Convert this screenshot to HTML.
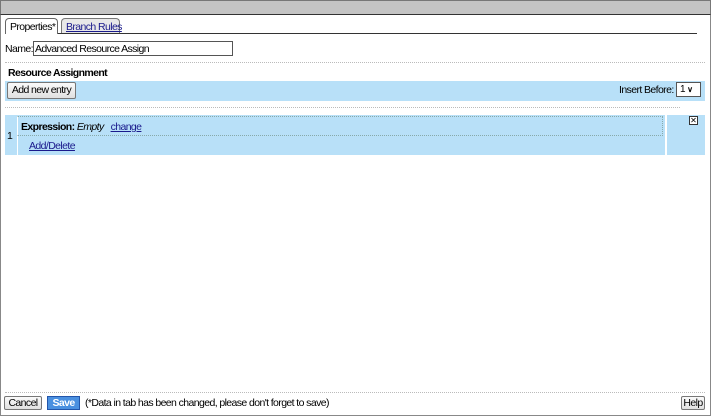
<!DOCTYPE html>
<html><head><style>
*{margin:0;padding:0;box-sizing:border-box}
body{width:711px;height:416px;background:#fff;font-family:"Liberation Sans",Arial,sans-serif;font-size:10.5px;letter-spacing:-0.6px;color:#000;position:relative;overflow:hidden;white-space:nowrap}
.a{position:absolute}
a{color:#1a1a8c;text-decoration:underline}
.btn{position:absolute;border:1px solid #777;border-radius:2px;background:linear-gradient(#fafafa,#e0e0e0);line-height:12px;text-align:center}
.dot{position:absolute;height:0;border-top:1px dotted #bbb}
</style></head><body>
<div class="a" style="left:0;top:0;width:711px;height:416px;border:1px solid #888;border-top:none"></div>
<div class="a" style="left:0;top:0;width:711px;height:15px;background:#c4c4c4;border:1px solid #777;border-bottom:1px solid #333"></div>
<div class="a" style="left:5px;top:33px;width:692px;border-top:1px solid #333"></div>
<div class="a" style="left:5px;top:18px;width:53px;height:16px;border:1px solid #666;border-bottom:none;border-radius:4px 4px 0 0;background:#fff;padding:2px 0 0 4px">Properties*</div>
<div class="a" style="left:61px;top:18px;width:59px;height:15px;border:1px solid #777;border-bottom:none;border-radius:4px 4px 0 0;background:#e8e8e8;padding:2px 0 0 4px"><a>Branch Rules</a></div>
<div class="a" style="left:5px;top:43px">Name:</div>
<div class="a" style="left:33px;top:41px;width:200px;height:15px;border:1px solid #555;padding:1px 0 0 1px;line-height:12px">Advanced Resource Assign</div>
<div class="dot" style="left:5px;top:62px;width:700px"></div>
<div class="a" style="left:8px;top:67px;font-weight:bold">Resource Assignment</div>
<div class="a" style="left:5px;top:81px;width:700px;height:20px;background:#b8e0f8"></div>
<div class="btn" style="left:7px;top:82px;width:69px;height:17px;line-height:15px">Add new entry</div>
<div class="a" style="left:619px;top:84px">Insert Before:</div>
<div class="a" style="left:676px;top:82px;width:25px;height:15px;border:1px solid #555;background:#fff;font-size:10px;padding-left:3px;line-height:13px">1 <span style="font-size:8px;font-weight:bold">&#8744;</span></div>
<div class="dot" style="left:5px;top:107px;width:675px"></div>
<div class="a" style="left:5px;top:115px;width:660px;height:40px;background:#b8e0f8"></div>
<div class="a" style="left:667px;top:115px;width:38px;height:40px;background:#b8e0f8"></div>
<div class="a" style="left:17px;top:116px;width:646px;height:20px;border:1px dotted #8aa;border-left:1px solid #fff"></div>
<div class="a" style="left:17px;top:136px;width:1px;height:19px;background:#fff"></div>
<div class="a" style="left:7px;top:130px">1</div>
<div class="a" style="left:21px;top:121px"><b>Expression:</b> <i>Empty</i> &nbsp; <a>change</a></div>
<div class="a" style="left:29px;top:140px"><a>Add/Delete</a></div>
<div class="a" style="left:689px;top:116px;width:9px;height:9px;border:1px solid #333;background:#fff;font-size:8px;line-height:7px;text-align:center;letter-spacing:0">✕</div>
<div class="dot" style="left:5px;top:392px;width:700px"></div>
<div class="btn" style="left:4px;top:396px;width:38px;height:14px">Cancel</div>
<div class="a" style="left:47px;top:396px;width:33px;height:14px;background:#4a90e0;border:1px solid #2255aa;color:#fff;font-weight:bold;text-align:center;line-height:12px">Save</div>
<div class="a" style="left:85px;top:397px">(*Data in tab has been changed, please don't forget to save)</div>
<div class="btn" style="left:681px;top:396px;width:24px;height:14px">Help</div>
</body></html>
